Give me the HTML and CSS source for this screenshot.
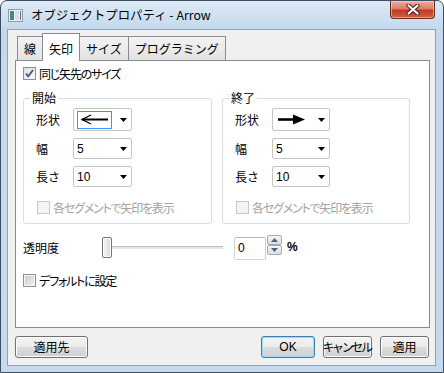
FILE: index.html
```html
<!DOCTYPE html>
<html lang="ja">
<head>
  <meta charset="UTF-8">
  <title>オブジェクトプロパティ - Arrow</title>
  <link rel="stylesheet" href="styles.css">
</head>
<body>
  <div class="window">
    <div class="titlebar">
      <svg class="app-icon" width="15" height="13" viewBox="0 0 15 13">
        <rect x="0.5" y="0.5" width="14" height="12" fill="#eef2f5" stroke="#8e9aa6"/>
        <rect x="2" y="2" width="4" height="9" fill="#3f8a86"/>
        <rect x="7" y="2" width="4" height="9" fill="#d8dee3"/>
        <rect x="12" y="2" width="1" height="9" fill="#5f6e7c"/>
      </svg>
      <span class="title">オブジェクトプロパティ - Arrow</span>
      <div class="close">
        <svg width="14" height="11" viewBox="0 0 14 11">
          <path d="M2.5 1.5 L11.5 9.5 M11.5 1.5 L2.5 9.5" stroke="#4a1d14" stroke-width="4.2" stroke-linecap="round"/>
          <path d="M2.5 1.5 L11.5 9.5 M11.5 1.5 L2.5 9.5" stroke="#ffffff" stroke-width="2.2" stroke-linecap="round"/>
        </svg>
      </div>
    </div>

    <div class="client">
      <div class="tabs">
        <div class="tab">線</div>
        <div class="tab active">矢印</div>
        <div class="tab">サイズ</div>
        <div class="tab">プログラミング</div>
      </div>

      <div class="panel">
        <div class="check">
          <span class="box checked">
            <svg width="11" height="11" viewBox="0 0 11 11"><path d="M2 5.5 L4.3 8.3 L9 2" fill="none" stroke="#3b5592" stroke-width="1.8"/></svg>
          </span>
          <span class="check-text">同じ矢先のサイズ</span>
        </div>

        <div class="groups">
          <fieldset class="group">
            <legend>開始</legend>
            <div class="field tall">
              <span class="lbl">形状</span>
              <div class="combo wide">
                <span class="focus">
                  <svg width="32" height="15" viewBox="0 0 32 15">
                    <path d="M3 7.5 L29 7.5" stroke="#000" stroke-width="2"/>
                    <path d="M12 3 L3 7.5 L12 12" fill="none" stroke="#000" stroke-width="1.3"/>
                  </svg>
                </span>
                <svg class="drop" width="7" height="4" viewBox="0 0 7 4"><path d="M0 0 H7 L3.5 4 Z" fill="#000"/></svg>
              </div>
            </div>
            <div class="field">
              <span class="lbl">幅</span>
              <div class="combo wide"><span class="val">5</span><svg class="drop" width="7" height="4" viewBox="0 0 7 4"><path d="M0 0 H7 L3.5 4 Z" fill="#000"/></svg></div>
            </div>
            <div class="field">
              <span class="lbl">長さ</span>
              <div class="combo wide"><span class="val">10</span><svg class="drop" width="7" height="4" viewBox="0 0 7 4"><path d="M0 0 H7 L3.5 4 Z" fill="#000"/></svg></div>
            </div>
            <div class="check disabled">
              <span class="box"></span>
              <span class="check-text">各セグメントで矢印を表示</span>
            </div>
          </fieldset>

          <fieldset class="group">
            <legend>終了</legend>
            <div class="field tall">
              <span class="lbl">形状</span>
              <div class="combo">
                <span class="shape-end">
                  <svg width="30" height="15" viewBox="0 0 30 15">
                    <path d="M1 7.5 L20 7.5" stroke="#000" stroke-width="2.6"/>
                    <path d="M16 2.5 L28 7.5 L16 12.5 Z" fill="#000"/>
                  </svg>
                </span>
                <svg class="drop" width="7" height="4" viewBox="0 0 7 4"><path d="M0 0 H7 L3.5 4 Z" fill="#000"/></svg>
              </div>
            </div>
            <div class="field">
              <span class="lbl">幅</span>
              <div class="combo"><span class="val">5</span><svg class="drop" width="7" height="4" viewBox="0 0 7 4"><path d="M0 0 H7 L3.5 4 Z" fill="#000"/></svg></div>
            </div>
            <div class="field">
              <span class="lbl">長さ</span>
              <div class="combo"><span class="val">10</span><svg class="drop" width="7" height="4" viewBox="0 0 7 4"><path d="M0 0 H7 L3.5 4 Z" fill="#000"/></svg></div>
            </div>
            <div class="check disabled">
              <span class="box"></span>
              <span class="check-text">各セグメントで矢印を表示</span>
            </div>
          </fieldset>
        </div>

        <div class="opacity">
          <span class="opacity-lbl">透明度</span>
          <div class="slider">
            <span class="thumb"></span>
            <span class="track"></span>
          </div>
          <div class="spin">
            <div class="spin-input">0</div>
            <div class="spin-btns">
              <span class="spin-btn"><svg width="7" height="4" viewBox="0 0 7 4"><path d="M0 4 H7 L3.5 0 Z" fill="#4d6185"/></svg></span>
              <span class="spin-btn"><svg width="7" height="4" viewBox="0 0 7 4"><path d="M0 0 H7 L3.5 4 Z" fill="#4d6185"/></svg></span>
            </div>
          </div>
          <span class="percent">%</span>
        </div>

        <div class="check default-check">
          <span class="box unchecked"></span>
          <span class="check-text">デフォルトに設定</span>
        </div>
      </div>

      <div class="buttons">
        <button class="btn apply-to">適用先</button>
        <button class="btn ok">OK</button>
        <button class="btn cancel">キャンセル</button>
        <button class="btn apply">適用</button>
      </div>
    </div>
  </div>
</body>
</html>
```

FILE: styles.css
```css
body {
  margin: 0;
  font-family: "Noto Sans CJK JP", sans-serif;
  font-size: 12px;
  color: #000;
  background: #fff;
}

.window {
  width: 444px;
  height: 373px;
  box-sizing: border-box;
  border: 1px solid #3e4d60;
  border-radius: 7px 7px 0 0;
  background: linear-gradient(180deg, #dde9f6 0, #c4d9ee 28px, #c6daee 100%);
  padding: 0 7px 6px 6px;
  display: flex;
  flex-direction: column;
}

.titlebar {
  height: 28px;
  display: flex;
  align-items: center;
}
.app-icon {
  margin: 0 8px 0 1px;
  flex-shrink: 0;
}
.title {
  font-size: 12.4px;
  line-height: 16px;
  margin-top: -1px;
}
.close {
  margin-left: auto;
  margin-right: 1px;
  align-self: flex-start;
  width: 45px;
  height: 18px;
  box-sizing: border-box;
  border: 1px solid #6a2a1f;
  border-top: none;
  border-radius: 0 0 4px 4px;
  background: linear-gradient(180deg, #eab0a3 0, #dc7b66 45%, #c43b22 55%, #d0604a 100%);
  box-shadow: inset 0 0 0 1px rgba(255, 220, 210, 0.5);
  display: flex;
  align-items: center;
  justify-content: center;
}

.client {
  flex: 1;
  background: #f0f0f0;
  border: 1px solid #8da2ba;
  padding: 3px 5px 0 7px;
  display: flex;
  flex-direction: column;
}

/* タブ */
.tabs {
  display: flex;
  align-items: flex-end;
  height: 27px;
  padding-left: 2px;
}
.tab {
  height: 24px;
  box-sizing: border-box;
  line-height: 23px;
  padding: 0 6px;
  border: 1px solid #898c95;
  border-bottom: none;
  margin-left: -1px;
  background: linear-gradient(180deg, #f3f3f3, #e2e2e2);
}
.tab:first-child {
  margin-left: 0;
}
.tab.active {
  height: 28px;
  padding-top: 3px;
  margin-bottom: -1px;
  background: #fff;
  position: relative;
  z-index: 1;
}

.panel {
  height: 268px;
  box-sizing: border-box;
  background: #fff;
  border: 1px solid #898c95;
  padding: 6px 7px 0;
}

/* チェックボックス */
.check {
  display: flex;
  align-items: center;
  height: 13px;
  gap: 2px;
  line-height: 13px;
}
.check-text {
  font-feature-settings: "palt";
  letter-spacing: -1.2px;
  white-space: nowrap;
}
.box {
  width: 13px;
  height: 13px;
  box-sizing: border-box;
  border: 1px solid #8e8f8f;
  background: linear-gradient(135deg, #dcdcdc, #fbfbfb);
  display: flex;
  align-items: center;
  justify-content: center;
  flex-shrink: 0;
  margin-right: 1px;
}
.box.unchecked {
  background: linear-gradient(135deg, #c8c8c8, #f4f4f4);
  box-shadow: inset 0 0 0 1px #f7f7f7;
}
.check.disabled {
  color: #a3a3a3;
}
.check.disabled .box {
  border-color: #c8c8c8;
  background: #f4f4f4;
}

/* グループ */
.groups {
  display: grid;
  grid-template-columns: 189px 188px;
  column-gap: 10px;
  margin-top: 10px;
}
.group {
  margin: 0;
  min-width: 0;
  padding: 2px 0 9px 6px;
  border: 1px solid #d5dfe5;
  border-radius: 3px;
}
.group legend {
  padding: 0 2px;
  line-height: 16px;
}
.field {
  display: flex;
  align-items: center;
  height: 21px;
  margin: 7px 0 0 6px;
}
.field.tall {
  height: 23px;
  margin-top: 0;
}
.lbl {
  width: 37px;
  flex-shrink: 0;
}
.combo {
  width: 58px;
  height: 100%;
  box-sizing: border-box;
  border: 1px solid #c4c4c4;
  border-radius: 2px;
  background: #fff;
  display: flex;
  align-items: center;
  padding-left: 3px;
  font-family: "Liberation Sans", sans-serif;
  font-size: 12px;
}
.combo.wide {
  width: 59px;
}
.combo .drop {
  margin-left: auto;
  margin-right: 4px;
}
.focus {
  width: 35px;
  height: 18px;
  box-sizing: border-box;
  border: 1px solid #3399ff;
  display: flex;
  align-items: center;
  justify-content: center;
}
.shape-end {
  display: flex;
  align-items: center;
  padding-left: 1px;
}
.group .check {
  margin: 14px 0 0 7px;
}

/* 透明度 */
.opacity {
  display: flex;
  align-items: center;
  height: 22px;
  margin-top: 12px;
}
.opacity-lbl {
  width: 79px;
  flex-shrink: 0;
}
.slider {
  width: 121px;
  display: flex;
  align-items: center;
}
.thumb {
  width: 10px;
  height: 21px;
  box-sizing: border-box;
  border: 1px solid #70757a;
  border-radius: 2px;
  background: linear-gradient(90deg, #f4f4f4, #dadada);
  box-shadow: inset 0 0 0 1px #fbfbfb;
}
.track {
  flex: 1;
  height: 3px;
  background: linear-gradient(180deg, #b7bdbd 0, #b7bdbd 1px, #e3e7e7 1px, #e3e7e7 3px);
}
.spin {
  display: flex;
  margin-left: 11px;
}
.spin-input {
  width: 32px;
  height: 23px;
  box-sizing: border-box;
  border: 1px solid #cfd2d6;
  border-top-color: #b5b9be;
  border-radius: 2px;
  margin-top: 2px;
  padding: 2px 0 0 3px;
  font-family: "Liberation Sans", sans-serif;
  font-size: 12px;
  line-height: 16px;
}
.spin-btns {
  display: flex;
  flex-direction: column;
  margin-left: 1px;
}
.spin-btn {
  width: 15px;
  height: 10px;
  box-sizing: border-box;
  border: 1px solid #a7abb0;
  border-radius: 2px;
  background: linear-gradient(180deg, #f6f6f6, #dedede);
  display: flex;
  align-items: center;
  justify-content: center;
}
.percent {
  margin-left: 5px;
  font-family: "Liberation Sans", sans-serif;
  font-size: 12px;
  font-weight: bold;
}
.default-check {
  margin-top: 16px;
}

/* ボタン */
.buttons {
  display: flex;
  gap: 8px;
  margin-top: 8px;
  padding-right: 1px;
}
.btn {
  height: 22px;
  box-sizing: border-box;
  border: 1px solid #707070;
  border-radius: 3px;
  background: linear-gradient(180deg, #f2f2f2 0, #ebebeb 50%, #dddddd 50%, #cfcfcf 100%);
  box-shadow: inset 0 0 0 1px #fcfcfc;
  font-family: "Noto Sans CJK JP", sans-serif;
  font-size: 12px;
  line-height: 18px;
  padding: 0;
  color: #000;
}
.apply-to {
  width: 73px;
  margin-right: auto;
}
.ok {
  width: 54px;
  border-color: #3c7fb1;
  box-shadow: inset 0 0 0 1px #9ddcf6;
  font-family: "Liberation Sans", sans-serif;
}
.cancel {
  width: 49px;
  letter-spacing: -2.4px;
  text-indent: -2px;
  white-space: nowrap;
}
.apply {
  width: 49px;
}
```
